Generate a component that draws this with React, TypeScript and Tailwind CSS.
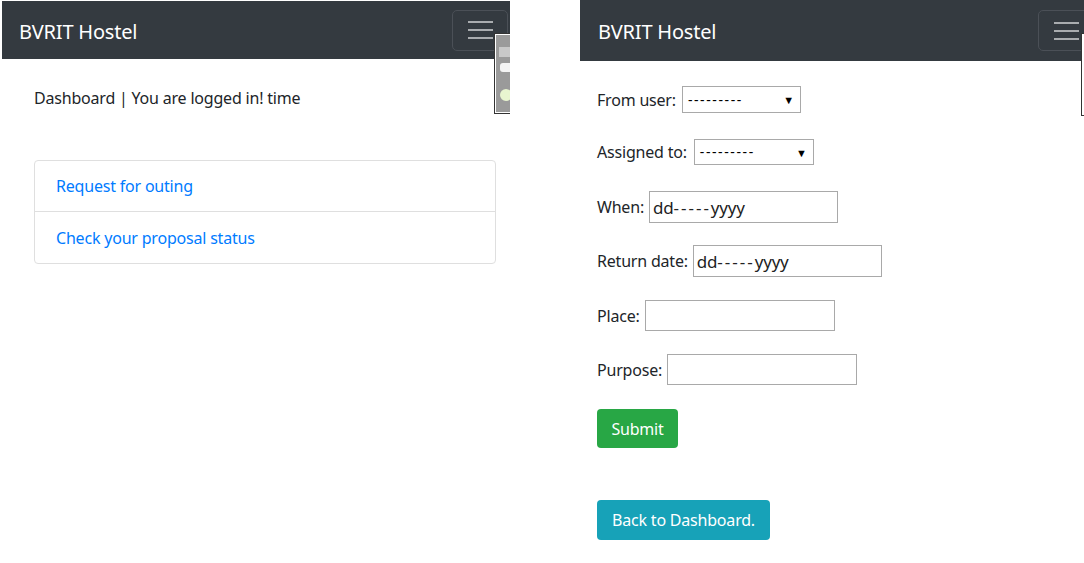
import React from "react";

const font = { fontFamily: '"Noto Sans", "Open Sans", Arial, sans-serif' };

function Hamburger() {
  return (
    <div className="flex h-[41px] w-[56px] shrink-0 items-center justify-center rounded-[5px] border border-[#4b5057]">
      <div className="flex w-[25px] flex-col gap-[6px]">
        <div className="h-[2px] bg-[#a9acaf]" />
        <div className="h-[2px] bg-[#a9acaf]" />
        <div className="h-[2px] bg-[#a9acaf]" />
      </div>
    </div>
  );
}

function SelectBox({ w, ml }: { w: string; ml: string }) {
  return (
    <div className={`${ml} flex h-full ${w} items-center justify-between border border-[#a9a9a9] bg-white pl-[5px] pr-[6px]`}>
      <span className="text-[14px] leading-none tracking-[1.6px] text-black">---------</span>
      <span className="text-[11px] leading-none text-black">▼</span>
    </div>
  );
}

function TextBox({ w, date }: { w: string; date?: boolean }) {
  return (
    <div className={`ml-[5px] flex h-full ${w} items-center border border-[#a9a9a9] bg-white pl-[3px]`}>
      {date && (
        <span className="text-[17px] leading-none text-[#222]">
          dd<span className="tracking-[2px]">-----</span>yyyy
        </span>
      )}
    </div>
  );
}

export default function App() {
  return (
    <div className="relative h-[563px] w-[1084px] overflow-hidden bg-white text-[#212529] tracking-[-0.2px]" style={font}>
      <div className="flex">
        {/* Left panel */}
        <div className="relative ml-[2px] mt-[1px] h-[562px] w-[508px] shrink-0 overflow-hidden">
          <div className="flex h-[58px] items-center justify-between bg-[#343a40] pl-[17px]">
            <span className="pt-[3px] text-[20px] leading-[30px] text-white">BVRIT Hostel</span>
            <div className="mr-[2px]">
              <Hamburger />
            </div>
          </div>
          <div className="px-[32px] pt-[27px]">
            <p className="text-[16px] leading-[24px]">Dashboard | You are logged in! time</p>
            <div className="mt-[50px] w-[462px] rounded-[4px] border border-[#dfdfdf]">
              <div className="flex h-[51px] items-center border-b border-[#dfdfdf] px-[21px]">
                <span className="text-[16px] text-[#007bff]">Request for outing</span>
              </div>
              <div className="flex h-[51px] items-center px-[21px]">
                <span className="text-[16px] text-[#007bff]">Check your proposal status</span>
              </div>
            </div>
          </div>
          {/* popup artifact */}
          <div className="absolute left-[492px] top-[32px] h-[81px] w-[20px] border border-[#333] bg-white p-[1px]">
            <div className="relative h-full w-full bg-[#9a9a9a]">
              <div className="absolute left-[3px] top-[12px] h-[10px] w-[14px] bg-[#c8c8c8]" />
              <div className="absolute left-[4px] top-[28px] h-[9px] w-[12px] rounded-[3px] bg-[#f4f4f4]" />
              <div className="absolute left-[4px] top-[54px] h-[12px] w-[12px] rounded-full bg-[#e8f5d0]" />
            </div>
          </div>
        </div>

        {/* Right panel */}
        <div className="relative ml-[70px] h-[563px] w-[504px] shrink-0 overflow-hidden">
          <div className="flex h-[61px] items-center justify-between bg-[#343a40] pl-[18px]">
            <span className="pt-[2px] text-[20px] leading-[30px] text-white">BVRIT Hostel</span>
            <div className="mr-[-10px]">
              <Hamburger />
            </div>
          </div>
          <div className="flex flex-col items-start pl-[17px] pt-[25px] text-[16px]">
            <div className="flex h-[27px] items-center">
              <span>From user:</span>
              <SelectBox w="w-[119px]" ml="ml-[6px]" />
            </div>
            <div className="mt-[26px] flex h-[26px] items-center">
              <span>Assigned to:</span>
              <SelectBox w="w-[120px]" ml="ml-[7px]" />
            </div>
            <div className="mt-[26px] flex h-[32px] items-center">
              <span>When:</span>
              <TextBox w="w-[189px]" date />
            </div>
            <div className="mt-[22px] flex h-[32px] items-center">
              <span>Return date:</span>
              <TextBox w="w-[189px]" date />
            </div>
            <div className="mt-[23px] flex h-[31px] items-center">
              <span>Place:</span>
              <TextBox w="w-[190px]" />
            </div>
            <div className="mt-[23px] flex h-[31px] items-center">
              <span>Purpose:</span>
              <TextBox w="w-[190px]" />
            </div>
            <button className="mt-[24px] h-[39px] w-[81px] rounded-[4px] bg-[#28a745] text-[16px] text-white">
              Submit
            </button>
            <button className="mt-[52px] h-[40px] w-[173px] rounded-[4px] bg-[#17a2b8] text-[16px] text-white">
              Back to Dashboard.
            </button>
          </div>
          {/* popup artifact */}
          <div className="absolute left-[501px] top-[33px] h-[83px] w-[12px] border border-[#333] bg-white" />
        </div>
      </div>
    </div>
  );
}
